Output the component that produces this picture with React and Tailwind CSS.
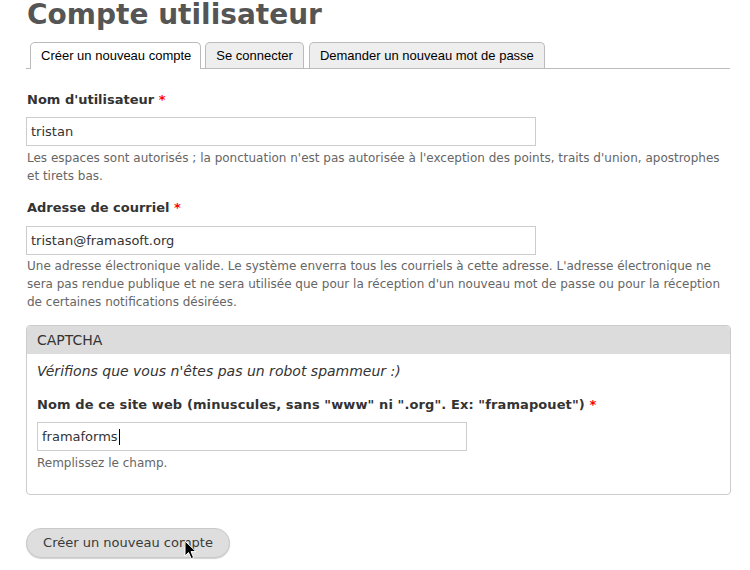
import React from "react";

const dv = { fontFamily: '"DejaVu Sans", sans-serif' };

function Req() {
  return <span className="text-[#ff0000] font-bold"> *</span>;
}

export default function App() {
  return (
    <div
      className="w-[750px] h-[570px] bg-white overflow-hidden relative text-[#333] text-[13px]"
      style={dv}
    >
      <div className="pl-[26px] w-[730px]">
        <h1 className="text-[28px] leading-[29px] h-[29px] font-bold text-[#555] pl-[1px]">
          Compte utilisateur
        </h1>

        <ul
          className="mt-[13px] flex items-end h-[27px] border-b border-[#bbb] pl-[4px]"
          style={{ fontFamily: '"Liberation Sans", Arial, sans-serif' }}
        >
          <li className="h-[27px] -mb-px bg-white border border-b-0 border-[#bbb] rounded-t-[5px] pl-[10px] pr-[9px] leading-[26px] text-[13px] text-black">
            Créer un nouveau compte
          </li>
          <li className="ml-[4px] h-[26px] bg-[#eee] border border-b-0 border-[#bbb] rounded-t-[5px] px-[10px] leading-[25px] text-[13px] text-black">
            Se connecter
          </li>
          <li className="ml-[5px] h-[26px] bg-[#eee] border border-b-0 border-[#bbb] rounded-t-[5px] px-[10px] leading-[25px] text-[13px] text-black">
            Demander un nouveau mot de passe
          </li>
        </ul>

        <div className="mt-[22px]">
          <label className="block font-bold leading-[18px] pl-[1px] text-[#333]">
            Nom d'utilisateur
            <Req />
          </label>
          <div className="mt-[8px] w-[510px] h-[29px] border border-[#ccc] px-[4px] leading-[27px] text-[13px] text-[#333]">
            tristan
          </div>
          <div className="mt-[3px] text-[12px] leading-[18px] text-[#666] pl-[1px]">
            Les espaces sont autorisés ; la ponctuation n'est pas autorisée à
            l'exception des points, traits d'union, apostrophes
            <br />
            et tirets bas.
          </div>
        </div>

        <div className="mt-[14px]">
          <label className="block font-bold leading-[18px] pl-[1px] text-[#333]">
            Adresse de courriel
            <Req />
          </label>
          <div className="mt-[9px] w-[510px] h-[29px] border border-[#ccc] px-[4px] leading-[27px] text-[13px] text-[#333]">
            tristan@framasoft.org
          </div>
          <div className="mt-[2px] text-[12px] leading-[18px] text-[#666] pl-[1px]">
            Une adresse électronique valide. Le système enverra tous les
            courriels à cette adresse. L'adresse électronique ne
            <br />
            sera pas rendue publique et ne sera utilisée que pour la réception
            d'un nouveau mot de passe ou pour la réception
            <br />
            de certaines notifications désirées.
          </div>
        </div>

        <fieldset className="mt-[14px] w-[705px] h-[170px] border border-[#ccc] rounded-[4px] overflow-hidden">
          <div className="h-[28px] bg-[#dcdcdc] px-[10px] leading-[28px] text-[14px] text-[#333]">
            CAPTCHA
          </div>
          <div className="px-[10px]">
            <div className="mt-[8px] italic leading-[19px] text-[14px] text-[#333]">
              Vérifions que vous n'êtes pas un robot spammeur :)
            </div>
            <label className="block mt-[15px] font-bold leading-[18px] text-[#333] tracking-[0.1px]">
              Nom de ce site web (minuscules, sans "www" ni ".org". Ex:
              "framapouet")
              <Req />
            </label>
            <div className="mt-[8px] w-[430px] h-[29px] border border-[#ccc] px-[4px] leading-[27px] text-[13px] text-[#333] flex items-center">
              framaforms
              <span className="inline-block w-px h-[16px] bg-black ml-px" />
            </div>
            <div className="mt-[3px] text-[12px] leading-[18px] text-[#666]">
              Remplissez le champ.
            </div>
          </div>
        </fieldset>

        <div className="mt-[33px] relative">
          <button
            className="w-[204px] h-[30px] rounded-full bg-[#dedede] border border-[#c9c9c9] shadow-[0_1px_1px_rgba(0,0,0,0.18)] text-[13px] text-[#3a3a3a] leading-[28px] text-center"
            style={dv}
          >
            Créer un nouveau compte
          </button>
          <svg
            className="absolute left-[158px] top-[12px]"
            width="13"
            height="20"
            viewBox="0 0 13 20"
          >
            <path
              d="M1 1 L1 16 L4.5 12.5 L7.2 18.6 L9.6 17.6 L7 11.6 L12 11.6 Z"
              fill="#000"
              stroke="#fff"
              strokeWidth="1"
              strokeLinejoin="round"
            />
          </svg>
        </div>
      </div>
    </div>
  );
}
